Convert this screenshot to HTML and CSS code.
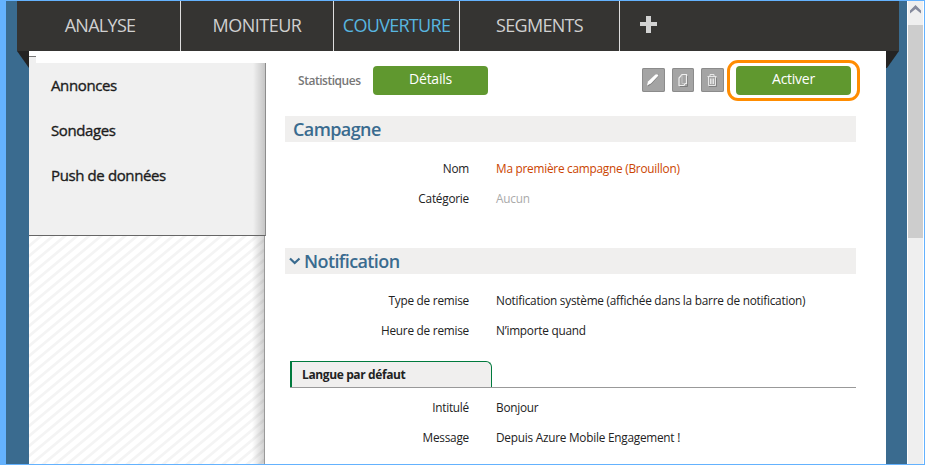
FILE: index.html
```html
<!DOCTYPE html>
<html lang="fr">
<head>
<meta charset="utf-8">
<title>Campagne</title>
<link rel="stylesheet" href="styles.css">
</head>
<body>
<div class="window">
  <div class="page">
    <nav class="nav">
      <a class="tab tab-analyse"><span>ANALYSE</span></a>
      <a class="tab tab-moniteur"><span>MONITEUR</span></a>
      <a class="tab tab-couverture"><span>COUVERTURE</span></a>
      <a class="tab tab-segments"><span>SEGMENTS</span></a>
      <a class="tab-add"><svg width="17" height="17" viewBox="0 0 17 17"><path d="M6 0h5v6h6v4h-6v7H6v-7H0V6h6z" fill="#d2d2d2"/></svg></a>
    </nav>
    <div class="body">
      <svg class="fold" width="12" height="17" viewBox="0 0 12 17"><path d="M0 0h12v17z" fill="#242323"/></svg>
      <div class="sheet">
        <aside class="side">
          <div class="side-top"></div>
          <ul class="menu">
            <li>Annonces</li>
            <li>Sondages</li>
            <li>Push de données</li>
          </ul>
          <div class="stripes">
            <svg width="235" height="228">
              <defs><pattern id="hatch" width="12" height="10" patternUnits="userSpaceOnUse"><path d="M-3 12.500L15-2.500M-3 2.500L3-2.500M9 12.500L15 7.500" stroke="#f4f4f4" stroke-width="2.800"/></pattern></defs>
              <rect width="235" height="228" fill="url(#hatch)"/>
            </svg>
          </div>
        </aside>
        <main class="main">
          <div class="toolbar">
            <span class="stats">Statistiques</span>
            <button class="btn details">Détails</button>
            <div class="tools">
              <button class="tool"><svg width="22" height="24" viewBox="0 0 22 24"><path d="M6 18.500l1-4 7-8q2-1 3 1l-7 8z" fill="#777"/><path d="M5 17.500l1-4 7.500-7q2-1 3 1l-7.500 8z" fill="#fff"/></svg></button>
              <button class="tool"><svg width="22" height="24" viewBox="0 0 22 24" fill="none"><path d="M8 18.500h7.500V8" stroke="#7c7c7c"/><path d="M10 6.500h4.500v9h-1.500l-1 2H7V10z" stroke="#eee" stroke-width="1.200"/><path d="M10 7v8.500h3" stroke="#ccc" stroke-width=".8"/></svg></button>
              <button class="tool"><svg width="22" height="24" viewBox="0 0 22 24" fill="none"><path d="M9 8V6.500h4V8M6.500 8.500h9M7.500 9v8.500h7V9M9.500 10.500v5.500M11 10.500v5.500M12.500 10.500v5.500" stroke="#e6e6e6"/><path d="M8 18.500h7.500V10" stroke="#777" stroke-width=".8"/></svg></button>
            </div>
            <div class="highlight"><button class="btn activate">Activer</button></div>
          </div>
          <h2 class="head head-campaign"><span>Campagne</span></h2>
          <dl class="fields f1">
            <dt>Nom</dt><dd class="warn">Ma première campagne (Brouillon)</dd>
            <dt>Catégorie</dt><dd class="none">Aucun</dd>
          </dl>
          <h2 class="head head-notif"><svg width="12" height="8" viewBox="0 0 12 8"><path d="M1 1.500l4.700 4.500 4.800-4.500" fill="none" stroke="#3a6b8f" stroke-width="2.200"/></svg><span>Notification</span></h2>
          <dl class="fields f2">
            <dt>Type de remise</dt><dd>Notification système (affichée dans la barre de notification)</dd>
            <dt>Heure de remise</dt><dd>N’importe quand</dd>
          </dl>
          <div class="lang"><div class="lang-tab">Langue par défaut</div></div>
          <dl class="fields f3">
            <dt>Intitulé</dt><dd>Bonjour</dd>
            <dt>Message</dt><dd>Depuis Azure Mobile Engagement !</dd>
          </dl>
        </main>
      </div>
      <svg class="fold" width="13" height="17" viewBox="0 0 13 17"><path d="M0 0h13L1 17H0z" fill="#242323"/></svg>
    </div>
  </div>
  <div class="scrollbar">
    <div class="arrow"><svg width="11" height="9" viewBox="0 0 11 9"><path d="M0 8.500V5.500L5.500 0 11 5.500v3L5.500 4z" fill="#858a9c"/></svg></div>
    <div class="thumb"></div>
  </div>
</div>
</body>
</html>
```
FILE: styles.css
```css
* { box-sizing: border-box; }
body { margin: 0; font-family: "Open Sans", "Noto Sans", sans-serif; font-size: 12px; color: #222; }
button { border: 0; padding: 0; margin: 0; font-family: inherit; display: block; }
svg { display: block; }
.window { width: 925px; height: 465px; overflow: hidden; display: flex; background: #64b2fe; padding: 1px 1px 1px 6px; }
.page { width: 901px; height: 463px; background: #3a6b8f; padding: 0 8px 0 11px; }
.nav { height: 50px; background: #353432; display: flex; color: #d0d0d0; font-size: 18px; letter-spacing: -0.7px; }
.tab { border-right: 1px solid #dedede; display: flex; align-items: center; justify-content: center; white-space: nowrap; padding-bottom: 2px; }
.tab-analyse { width: 164px; padding-left: 3px; }
.tab-moniteur { width: 153px; letter-spacing: -0.5px; }
.tab-couverture { width: 126px; color: #58b6e0; }
.tab-segments { width: 160px; }
.tab-add { padding: 15px 0 0 20px; }
.body { display: flex; height: 413px; }
.fold { flex: none; }
.sheet { width: 857px; background: #fff; display: flex; }
.side { width: 237px; flex: none; }
.side-top { height: 12px; background: linear-gradient(#777, #777) 0 5px / 7px 1px no-repeat, linear-gradient(#f0f0f0, #f0f0f0) 0 6px / 7px 6px no-repeat; }
.menu { list-style: none; margin: 0; padding: 0 0 0 22px; height: 173px; border-right: 1px solid #8c8c8c; border-bottom: 1px solid #666; background: linear-gradient(to right, rgba(0,0,0,0), rgba(0,0,0,.18)) right / 12px 100% no-repeat #f0f0f0; font-size: 15px; letter-spacing: -0.38px; -webkit-text-stroke: 0.35px #1c1c1c; color: #1c1c1c; }
.menu li { height: 45px; line-height: 45px; white-space: nowrap; }
.stripes { width: 236px; height: 228px; border-right: 1px solid #999; position: relative; }
.stripes::after { content: ""; position: absolute; right: 0; top: 0; width: 12px; height: 100%; background: linear-gradient(to right, rgba(0,0,0,0), rgba(0,0,0,.18)); }
.main { padding: 9px 0 0 19px; width: 620px; }
.toolbar { display: flex; height: 41px; padding-left: 13px; }
.stats { width: 75px; line-height: 41px; color: #777; font-weight: 600; font-size: 12px; letter-spacing: -0.47px; white-space: nowrap; }
.btn { width: 115px; height: 29px; background: #60982f; color: #fff; border-radius: 4px; font-size: 14px; letter-spacing: -0.25px; line-height: 26px; padding-bottom: 3px; }
.details { margin-top: 6px; }
.tools { display: flex; gap: 7px; margin: 8px 0 0 154px; }
.tool { width: 22.5px; height: 24px; background: #a4a4a4; border-radius: 2px; box-shadow: inset 0 0 0 1px #8b8b8b; }
.highlight { margin-left: 3.5px; width: 133px; height: 41px; border: 3px solid #ff8c00; border-radius: 11px; padding: 3px 6px; flex: none; }
.head { margin: 0; width: 571px; height: 26px; background: #f0efee; color: #3a6b8f; font-size: 18px; font-weight: 600; letter-spacing: -0.6px; line-height: 26px; display: flex; align-items: center; }
.head-campaign { margin-top: 15px; padding-left: 8px; }
.head-notif { padding-left: 4px; gap: 3px; }
.fields { margin: 0; display: grid; grid-template-columns: 184px 1fr; column-gap: 27px; grid-auto-rows: 30px; line-height: 30px; white-space: nowrap; font-size: 11.8px; letter-spacing: -0.235px; }
.fields dt { text-align: right; }
.fields dd { margin: 0; }
.f1 { padding-top: 11px; height: 106px; }
.f2 { padding-top: 11px; height: 87px; }
.f3 { padding-top: 4px; }
.warn { color: #cb4500; }
.none { color: #aaa; }
.lang { width: 566px; margin-left: 5px; height: 27px; border-bottom: 1px solid #999; }
.lang-tab { width: 202px; height: 26px; background: #f0efee; border: 1px solid #007a3d; border-width: 1px 1px 0 2px; border-radius: 0 6px 0 0; padding-left: 10px; font-weight: 700; line-height: 26px; letter-spacing: -0.38px; }
.scrollbar { width: 17px; background: #efefef; border-left: 1px solid #fff; border-right: 1px solid #fff; }
.arrow { height: 24px; padding: 4px 0 0 2px; }
.thumb { height: 213px; background: #cdcdcd; }
```
